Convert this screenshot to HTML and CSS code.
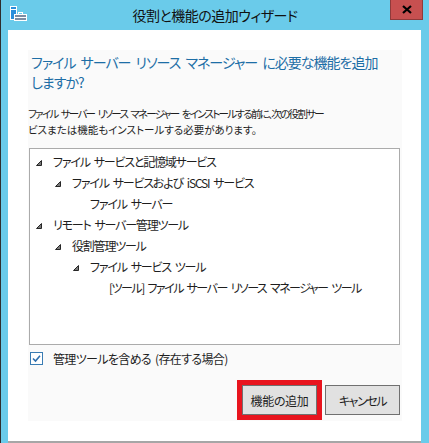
FILE: index.html
```html
<!DOCTYPE html>
<html lang="ja">
<head>
<meta charset="utf-8">
<title>役割と機能の追加ウィザード</title>
<link rel="stylesheet" href="styles.css">
</head>
<body>
<div class="window">
  <div class="titlebar">
    <svg class="app-icon" width="17" height="15" viewBox="0 0 17 15">
      <rect x="0.5" y="0.5" width="6" height="13" fill="#2A8EDB" stroke="#fff"/>
      <line x1="1" y1="3.5" x2="6" y2="3.5" stroke="#fff"/>
      <rect x="8.5" y="6.5" width="4" height="2" fill="none" stroke="#fff"/>
      <rect x="4.5" y="8.5" width="12" height="6" fill="#7D8DA3" stroke="#fff"/>
      <line x1="5" y1="11.5" x2="16" y2="11.5" stroke="#fff"/>
    </svg>
    <div class="title">役割と機能の追加ウィザード</div>
    <div class="close">
      <svg width="10" height="9" viewBox="0 0 10 9"><path d="M1 1 L9 8 M9 1 L1 8" stroke="#000" stroke-width="2.2" fill="none"/></svg>
    </div>
  </div>
  <div class="client">
    <div class="panel">
      <h1 class="heading">ファイル サーバー リソース マネージャー に必要な機能を追加<br>しますか?</h1>
      <p class="desc"><span class="desc-l1">ファイル サーバー リソース マネージャー をインストールする前に、次の役割サー</span><br><span class="desc-l2">ビスまたは機能もインストールする必要があります。</span></p>
      <div class="tree">
        <div class="row l0"><span class="exp"><svg width="6" height="6" viewBox="0 0 6 6"><polygon points="5.5,0.5 5.5,5.5 0.5,5.5" fill="#7a7a7a" stroke="#262626"/></svg></span>ファイル サービスと記憶域サービス</div>
        <div class="row l1"><span class="exp"><svg width="6" height="6" viewBox="0 0 6 6"><polygon points="5.5,0.5 5.5,5.5 0.5,5.5" fill="#7a7a7a" stroke="#262626"/></svg></span>ファイル サービスおよび iSCSI サービス</div>
        <div class="row l2"><span class="exp"></span>ファイル サーバー</div>
        <div class="row l0"><span class="exp"><svg width="6" height="6" viewBox="0 0 6 6"><polygon points="5.5,0.5 5.5,5.5 0.5,5.5" fill="#7a7a7a" stroke="#262626"/></svg></span>リモート サーバー管理ツール</div>
        <div class="row l1"><span class="exp"><svg width="6" height="6" viewBox="0 0 6 6"><polygon points="5.5,0.5 5.5,5.5 0.5,5.5" fill="#7a7a7a" stroke="#262626"/></svg></span>役割管理ツール</div>
        <div class="row l2"><span class="exp"><svg width="6" height="6" viewBox="0 0 6 6"><polygon points="5.5,0.5 5.5,5.5 0.5,5.5" fill="#7a7a7a" stroke="#262626"/></svg></span>ファイル サービス ツール</div>
        <div class="row l3 tight"><span class="exp"></span>[ツール] ファイル サーバー リソース マネージャー ツール</div>
      </div>
      <label class="check-row">
        <span class="checkbox"><svg width="13" height="13" viewBox="0 0 13 13"><rect x="0.5" y="0.5" width="12" height="12" fill="#fff" stroke="#3A7CB3"/><path d="M3 6.5 L5.5 9 L10 3.8" fill="none" stroke="#2F6FAD" stroke-width="1.6"/></svg></span>
        管理ツールを含める (存在する場合)
      </label>
      <div class="buttons">
        <span class="highlight"><button class="btn">機能の追加</button></span>
        <button class="btn btn-cancel">キャンセル</button>
      </div>
    </div>
  </div>
</div>
</body>
</html>
```
FILE: styles.css
```css
html, body {
  margin: 0;
  padding: 0;
}
body {
  font-family: "Noto Sans CJK JP", "Noto Sans", sans-serif;
  font-feature-settings: "palt";
  color: #1e1e1e;
  background: #6acbea;
}
.window {
  width: 429px;
  height: 443px;
  box-sizing: border-box;
  border-left: 1px solid #2e2e2e;
  background: #6acbea;
  display: flex;
  flex-direction: column;
}
.titlebar {
  height: 30px;
  display: grid;
  grid-template-columns: 1fr auto 1fr;
  align-items: start;
}
.app-icon {
  margin: 6px 0 0 9px;
  display: block;
}
.title {
  font-size: 14px;
  line-height: 18px;
  margin-top: 6px;
  letter-spacing: -0.5px;
  color: #111;
  white-space: nowrap;
}
.close {
  justify-self: end;
  margin-right: 6px;
  width: 33px;
  height: 20px;
  box-sizing: border-box;
  background: #c75050;
  border: 1px solid #8f3a3a;
  border-top: none;
  display: flex;
  align-items: center;
  justify-content: center;
}
.close svg { display: block; }
.client {
  flex: 1;
  margin: 0 8px 0 7px;
  background: #fff;
  border-bottom: 2px solid #a6a6a6;
  padding: 20px 19px 20px 20px;
  display: flex;
  flex-direction: column;
}
.panel {
  flex: 1;
  background: #fafafa;
  display: flex;
  flex-direction: column;
}
.heading {
  margin: 2px 0 0 3px;
  font-size: 14px;
  line-height: 20px;
  letter-spacing: -1px;
  word-spacing: 3px;
  font-weight: normal;
  color: #1d6ea6;
  white-space: nowrap;
}
.desc {
  margin: 14px 0 0 0;
  font-size: 10.5px;
  line-height: 16px;
  white-space: nowrap;
  color: #1e1e1e;
}
.desc-l1 { letter-spacing: -1.7px; word-spacing: 2.5px; }
.desc-l2 { letter-spacing: 0; }
.tree {
  margin: 10px 2px 0 1px;
  height: 197px;
  box-sizing: border-box;
  border: 1px solid #ababab;
  background: #fff;
  padding-top: 2px;
}
.row {
  height: 21px;
  display: flex;
  align-items: center;
  font-size: 12px;
  letter-spacing: -1.2px;
  word-spacing: 2.5px;
  color: #1e1e1e;
  white-space: pre;
}
.row.tight {
  letter-spacing: -1.5px;
  word-spacing: 2.5px;
}
.row.l0 { padding-left: 6px; }
.row.l1 { padding-left: 25px; }
.row.l2 { padding-left: 43px; }
.row.l3 { padding-left: 62px; }
.exp {
  width: 17px;
  flex: none;
  display: flex;
  align-items: center;
  padding-top: 2px;
}
.exp svg { display: block; }
.check-row {
  margin-top: 5px;
  height: 16px;
  display: flex;
  align-items: center;
  padding-left: 2px;
  font-size: 12px;
  letter-spacing: -0.65px;
  word-spacing: 2px;
  color: #1e1e1e;
  white-space: nowrap;
}
.checkbox {
  width: 13px;
  height: 13px;
  margin-right: 10px;
}
.checkbox svg { display: block; }
.buttons {
  margin-top: auto;
  margin-bottom: 1px;
  padding-right: 2px;
  display: flex;
  justify-content: flex-end;
  align-items: center;
  gap: 3px;
}
.highlight {
  border: 5px solid #e8141e;
  display: block;
}
.btn {
  display: block;
  width: 75px;
  height: 30px;
  box-sizing: border-box;
  margin: 0;
  padding: 0;
  background: #e1e1e1;
  border: 1px solid #707070;
  border-radius: 0;
  font-family: "Noto Sans CJK JP", sans-serif;
  font-feature-settings: "palt";
  font-size: 12px;
  letter-spacing: -0.3px;
  color: #1e1e1e;
}
.btn-cancel { letter-spacing: -1.4px; }
```
